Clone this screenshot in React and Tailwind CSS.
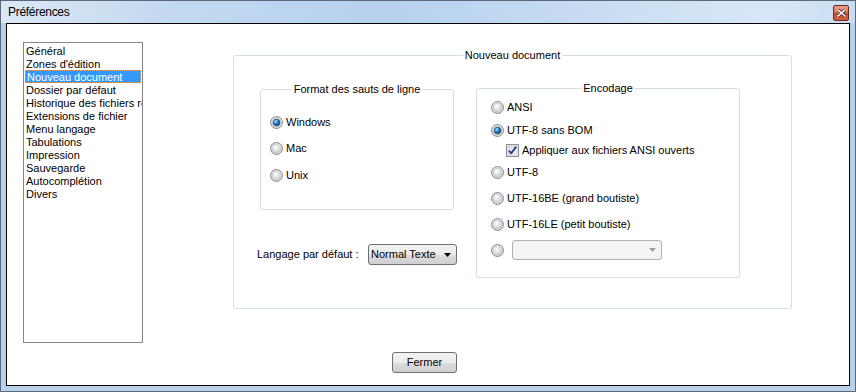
import React from "react";

const font = { fontFamily: '"Liberation Sans", Arial, sans-serif' };

function Radio({ checked }) {
  return (
    <svg width="13" height="13" viewBox="0 0 13 13" className="shrink-0">
      <defs>
        <radialGradient id="rg-outer" cx="50%" cy="40%" r="60%">
          <stop offset="0%" stopColor="#f4f4f4" />
          <stop offset="100%" stopColor="#d4d4d4" />
        </radialGradient>
        <radialGradient id="rg-inner" cx="40%" cy="35%" r="65%">
          <stop offset="0%" stopColor="#ffffff" />
          <stop offset="100%" stopColor="#cfcfcf" />
        </radialGradient>
        <radialGradient id="rg-dot" cx="35%" cy="30%" r="75%">
          <stop offset="0%" stopColor="#b6e4ff" />
          <stop offset="45%" stopColor="#2f8fdc" />
          <stop offset="100%" stopColor="#0c3f73" />
        </radialGradient>
      </defs>
      <circle cx="6.5" cy="6.5" r="6" fill="url(#rg-outer)" stroke="#8b8e92" strokeWidth="1" />
      <circle cx="6.5" cy="6.5" r="4.3" fill="url(#rg-inner)" stroke="#bdbdbd" strokeWidth="0.6" />
      {checked && <circle cx="6.5" cy="6.5" r="3.3" fill="url(#rg-dot)" stroke="#123a63" strokeWidth="0.7" />}
    </svg>
  );
}

function Checkbox() {
  return (
    <svg width="13" height="13" viewBox="0 0 13 13" className="shrink-0">
      <defs>
        <linearGradient id="cb-bg" x1="0" y1="0" x2="1" y2="1">
          <stop offset="0%" stopColor="#dcdcdc" />
          <stop offset="100%" stopColor="#f8f8f8" />
        </linearGradient>
      </defs>
      <rect x="0.5" y="0.5" width="12" height="12" fill="#f2f2f2" stroke="#8b8e92" />
      <rect x="2" y="2" width="9" height="9" fill="url(#cb-bg)" stroke="#c0c0c0" strokeWidth="0.6" />
      <path d="M3 6.6 L5.2 9.4 L10.2 2.6" fill="none" stroke="#2b3f8f" strokeWidth="1.8" strokeLinejoin="round" />
    </svg>
  );
}

function RadioRow({ checked, label, className = "" }) {
  return (
    <div className={`flex h-[16px] items-center gap-[3px] ${className}`}>
      <Radio checked={checked} />
      <span className="leading-none">{label}</span>
    </div>
  );
}

function GroupBox({ title, className = "", children }) {
  return (
    <div className={`relative rounded-[3px] border border-[#d5dfe5] ${className}`}>
      <span className="absolute -top-[8px] left-1/2 -translate-x-1/2 whitespace-nowrap bg-white px-[2px] leading-[14px]">
        {title}
      </span>
      {children}
    </div>
  );
}

const items = [
  "Général",
  "Zones d'édition",
  "Nouveau document",
  "Dossier par défaut",
  "Historique des fichiers récents",
  "Extensions de fichier",
  "Menu langage",
  "Tabulations",
  "Impression",
  "Sauvegarde",
  "Autocomplétion",
  "Divers",
];

export default function App() {
  return (
    <div
      style={font}
      className="flex h-[392px] w-[856px] flex-col border border-[#5a6a7c] bg-[#b9d2ec] text-[11px] text-black"
    >
      {/* Title bar */}
      <div className="flex h-[22px] shrink-0 items-start bg-[linear-gradient(to_right,#dbe7f4_0%,#c3d9f0_20%,#b6d1ee_45%,#c9ddf2_70%,#d7e7f7_90%,#c9ddf2_100%)]">
        <span className="ml-[7px] mt-[4px] text-[12px] leading-[14px] tracking-[-0.3px]">Préférences</span>
        <div className="ml-auto mr-[6px] mt-[4px] flex h-[16px] w-[16px] items-center justify-center rounded-[2px] border border-[#6b2a1e] bg-[linear-gradient(to_bottom,#e8a08a_0%,#d9785c_45%,#c44a2a_55%,#d2603c_100%)]">
          <svg width="9" height="8" viewBox="0 0 9 8">
            <path d="M1 1 L8 7 M8 1 L1 7" stroke="#3a2a28" strokeWidth="3" strokeLinecap="square" />
            <path d="M1 1 L8 7 M8 1 L1 7" stroke="#ffffff" strokeWidth="1.6" strokeLinecap="square" />
          </svg>
        </div>
      </div>

      {/* Client area */}
      <div className="mx-[5px] mb-[5px] flex flex-1 flex-col border border-black bg-white">
        <div className="flex pl-[16px] pt-[18px]">
          {/* List */}
          <div className="h-[301px] w-[120px] shrink-0 overflow-hidden border border-[#828790] p-px">
            {items.map((it, i) => (
              <div
                key={it}
                className={`h-[13px] whitespace-nowrap pl-px ${
                  i === 2
                    ? "border border-dotted border-[#e8a05c] bg-[#3399ff] pt-px text-white leading-[11px]"
                    : "pt-px leading-[12px]"
                }`}
              >
                {it}
              </div>
            ))}
          </div>

          {/* Nouveau document group */}
          <GroupBox title="Nouveau document" className="ml-[90px] mt-[13px] h-[254px] w-[559px] shrink-0">
            <div className="flex items-start pl-[26px] pt-[33px]">
              <div className="flex w-[197px] shrink-0 flex-col">
                <GroupBox title="Format des sauts de ligne" className="h-[121px] w-[194px]">
                  <div className="flex flex-col pl-[9px] pt-[19px]">
                    <div className="flex h-[26px] items-center">
                      <RadioRow checked label="Windows" />
                    </div>
                    <div className="flex h-[27px] items-center">
                      <RadioRow label="Mac" />
                    </div>
                    <div className="flex h-[27px] items-center">
                      <RadioRow label="Unix" />
                    </div>
                  </div>
                </GroupBox>
                <div className="-ml-[3px] mt-[34px] flex w-[200px] items-center justify-between">
                  <span>Langage par défaut :</span>
                  <div className="flex h-[21px] w-[89px] items-center rounded-[3px] border border-[#707070] bg-[linear-gradient(to_bottom,#f2f2f2_0%,#ebebeb_50%,#dddddd_50%,#cfcfcf_100%)] pl-[2px] pr-[5px]">
                    <span className="leading-none">Normal Texte</span>
                    <svg width="7" height="4" viewBox="0 0 7 4" className="ml-auto">
                      <path d="M0 0 L7 0 L3.5 4 Z" fill="#000" />
                    </svg>
                  </div>
                </div>
              </div>

              <GroupBox title="Encodage" className="-mt-px ml-[19px] h-[190px] w-[264px] shrink-0">
                <div className="flex flex-col pl-[14px] pt-[10px]">
                  <RadioRow label="ANSI" />
                  <RadioRow checked label="UTF-8 sans BOM" className="mt-[7px]" />
                  <div className="mt-[4px] flex h-[16px] items-center gap-[3px] pl-[15px]">
                    <Checkbox />
                    <span className="leading-none">Appliquer aux fichiers ANSI ouverts</span>
                  </div>
                  <RadioRow label="UTF-8" className="mt-[6px]" />
                  <RadioRow label="UTF-16BE (grand boutiste)" className="mt-[10px]" />
                  <RadioRow label="UTF-16LE (petit boutiste)" className="mt-[10px]" />
                  <div className="mt-[8px] flex h-[20px] items-center">
                    <Radio />
                    <div className="ml-[8px] flex h-[20px] w-[150px] items-center rounded-[3px] border border-[#adb2b5] bg-[#f4f4f4] pr-[5px]">
                      <svg width="7" height="4" viewBox="0 0 7 4" className="ml-auto">
                        <path d="M0 0 L7 0 L3.5 4 Z" fill="#a0a0a0" />
                      </svg>
                    </div>
                  </div>
                </div>
              </GroupBox>
            </div>
          </GroupBox>
        </div>

        <div className="mt-[9px] pl-[385px]">
          <button className="flex h-[21px] w-[65px] items-center justify-center rounded-[3px] border border-[#707070] bg-[linear-gradient(to_bottom,#f2f2f2_0%,#ebebeb_50%,#dddddd_50%,#cfcfcf_100%)] text-[11px] leading-none">
            Fermer
          </button>
        </div>
      </div>
    </div>
  );
}
